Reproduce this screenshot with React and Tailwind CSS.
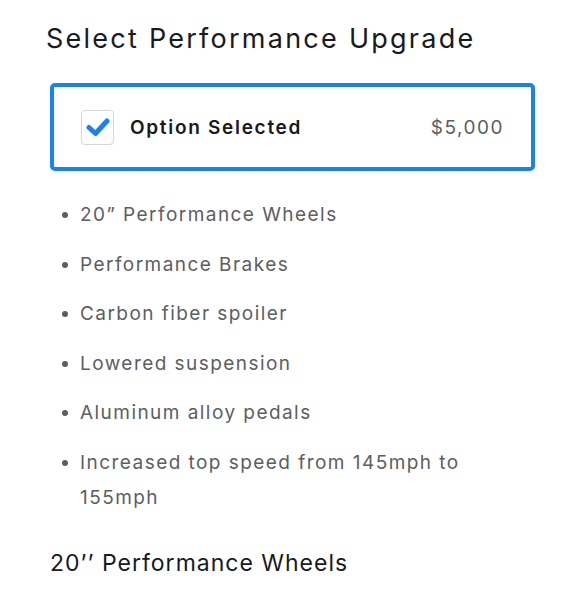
import React from "react";

const items = [
  "20” Performance Wheels",
  "Performance Brakes",
  "Carbon fiber spoiler",
  "Lowered suspension",
  "Aluminum alloy pedals",
  "Increased top speed from 145mph to 155mph",
];

export default function App() {
  return (
    <div className="w-[582px] h-[591px] bg-white overflow-hidden" style={{ fontFamily: "Inter, 'Open Sans', sans-serif" }}>
      <div className="pl-[46px] pt-[22px]">
        <h1 className="text-[27px] leading-[34px] tracking-[2.25px] text-[#171a20] font-normal">Select Performance Upgrade</h1>
      </div>
      <div className="ml-[50px] mt-[27px] w-[485px] h-[88px] border-4 border-[#1a83e8] rounded-[5px] flex items-center pl-[27px] pr-[27px]">
        <div className="w-[33px] h-[35px] border border-[#d6d6d6] rounded-[4px] flex items-center justify-center">
          <svg width="24" height="20" viewBox="0 0 24 20">
            <path d="M3 10.5 L9.5 16.5 L21 4" fill="none" stroke="#1a83e8" strokeWidth="5" strokeLinecap="round" strokeLinejoin="round" />
          </svg>
        </div>
        <span className="ml-[16px] pt-[2px] text-[19px] tracking-[1.7px] font-semibold text-[#171a20]">Option Selected</span>
        <span className="ml-auto pt-[2px] text-[19px] tracking-[1.5px] text-[#5c5e62]">$5,000</span>
      </div>
      <ul className="ml-[62px] mt-[26px] w-[440px] text-[19px] tracking-[1.45px] text-[#5c5e62] flex flex-col gap-[14.5px]">
        {items.map((t) => (
          <li key={t} className="flex leading-[35px]">
            <span className="w-[18px] shrink-0 flex pt-[15px]">
              <span className="w-[6px] h-[6px] rounded-full bg-[#5c5e62]" />
            </span>
            <span>{t}</span>
          </li>
        ))}
      </ul>
      <div className="pl-[50px] mt-[33px] text-[23px] leading-[30px] tracking-[1px] text-[#171a20]">20’’ Performance Wheels</div>
    </div>
  );
}
